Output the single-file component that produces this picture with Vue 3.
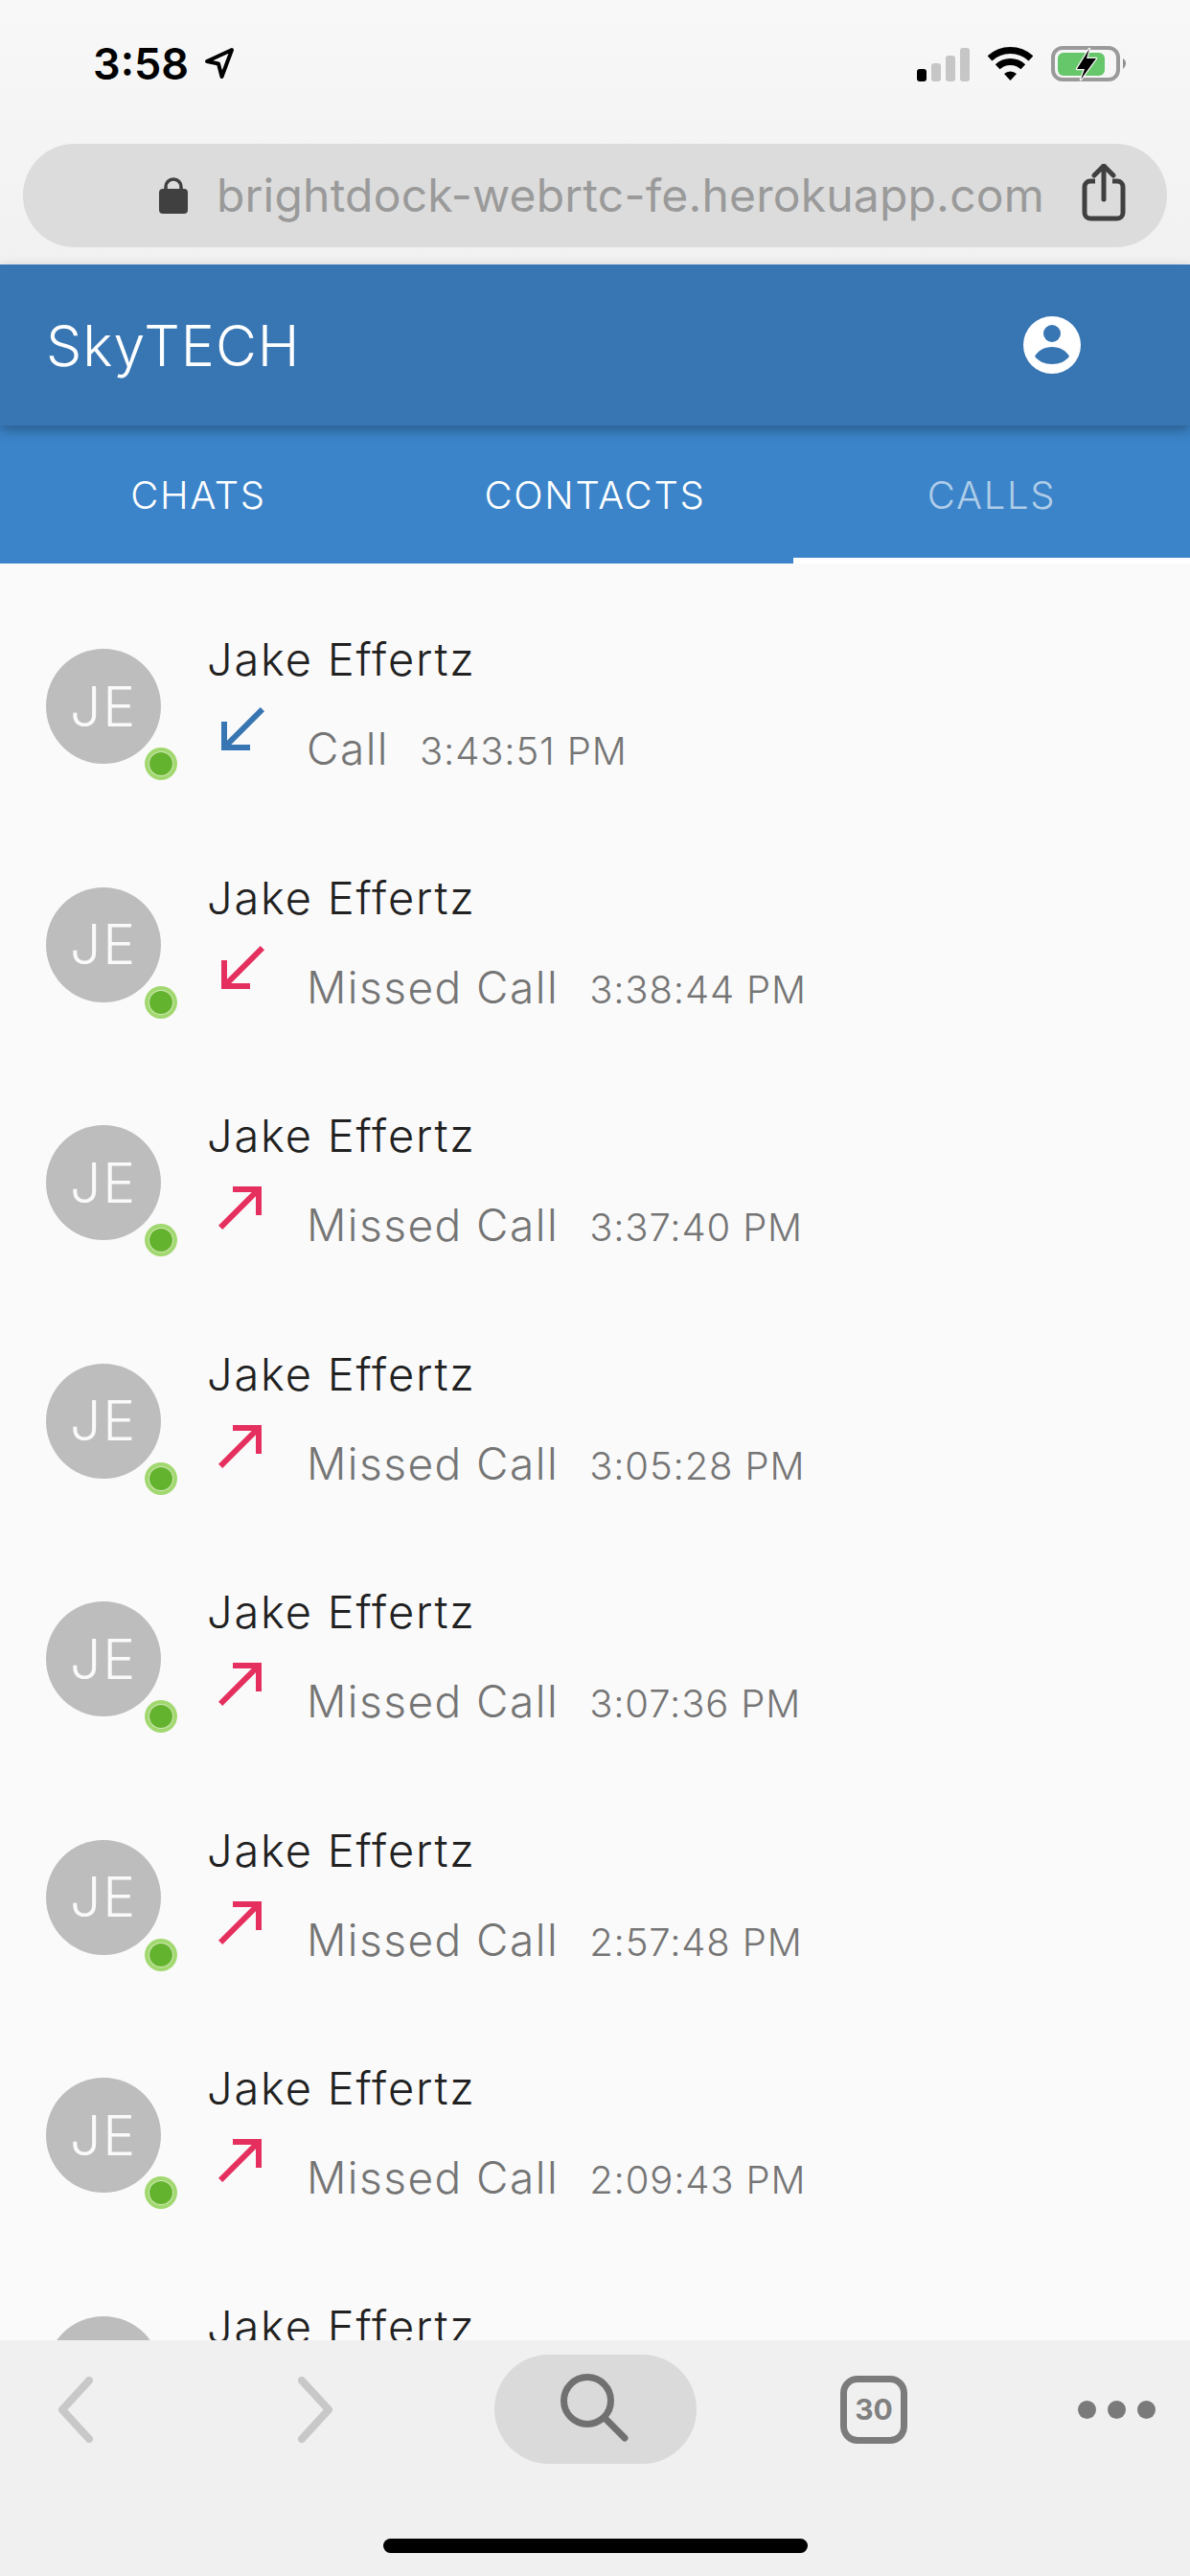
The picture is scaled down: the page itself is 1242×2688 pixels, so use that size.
<script setup>
const rows = [
  { label: 'Call', time: '3:43:51 PM', dir: 'in', color: 'blue' },
  { label: 'Missed Call', time: '3:38:44 PM', dir: 'in', color: 'pink' },
  { label: 'Missed Call', time: '3:37:40 PM', dir: 'out', color: 'pink' },
  { label: 'Missed Call', time: '3:05:28 PM', dir: 'out', color: 'pink' },
  { label: 'Missed Call', time: '3:07:36 PM', dir: 'out', color: 'pink' },
  { label: 'Missed Call', time: '2:57:48 PM', dir: 'out', color: 'pink' },
  { label: 'Missed Call', time: '2:09:43 PM', dir: 'out', color: 'pink' },
  { label: 'Missed Call', time: '2:01:12 PM', dir: 'out', color: 'pink' }
]

const arrows = {
  in: 'M20 5.41L18.59 4 7 15.59V9H5v10h10v-2H8.41z',
  out: 'M9 5v2h6.59L4 18.59 5.41 20 17 8.41V15h2V5z'
}
</script>

<template>
  <div class="phone">
    <div class="chrome">
      <div class="status">
        <span class="clock">3:58</span>
        <svg class="location" width="36" height="36" viewBox="0 0 36 36">
          <path d="M31 3 5 15l12 2.500L20.500 31z" fill="none" stroke="#000" stroke-width="4" stroke-linejoin="round" />
        </svg>
        <svg class="signal" width="55" height="36" viewBox="0 0 55 36">
          <rect x="0" y="23" width="10" height="13" rx="3" fill="#000" />
          <rect x="15" y="17" width="10" height="19" rx="3" fill="#c6c6c6" />
          <rect x="30" y="9" width="10" height="27" rx="3" fill="#c6c6c6" />
          <rect x="45" y="1" width="10" height="35" rx="3" fill="#c6c6c6" />
        </svg>
        <svg class="wifi" width="47" height="36" viewBox="0 0 47 36">
          <path d="M2 12A31.500 31.500 0 0 1 45 12" fill="none" stroke="#000" stroke-width="7" />
          <path d="M10.200 20.750A19.500 19.500 0 0 1 36.800 20.750" fill="none" stroke="#000" stroke-width="7" />
          <path d="M23.500 35 17 28A9.500 9.500 0 0 1 30 28z" fill="#000" />
        </svg>
        <svg class="battery" width="80" height="38" viewBox="0 0 80 38">
          <rect x="2" y="2" width="68" height="33" rx="10" fill="none" stroke="#9a9a9a" stroke-width="4" />
          <rect x="7" y="7" width="49" height="24" rx="6" fill="#66c76a" />
          <path d="M75 13c2 1 3 3 3 5s-1 4-3 6z" fill="#8f8f8f" />
          <path d="M40 3 27 24h8l-4 11 16-22H37z" fill="#000" stroke="#f8f8f8" stroke-width="2.500" paint-order="stroke" stroke-linejoin="round" />
        </svg>
      </div>
      <div class="urlbar">
        <svg class="lock" width="30" height="38" viewBox="0 0 30 38">
          <path d="M7 14V10a8 8 0 0 1 16 0v4" fill="none" stroke="#404040" stroke-width="3.500" />
          <rect x="0" y="12" width="30" height="26" rx="4" fill="#404040" />
        </svg>
        <span class="url">brightdock-webrtc-fe.herokuapp.com</span>
        <svg class="share" width="46" height="60" viewBox="0 0 46 60">
          <path d="M14 18H9a6 6 0 0 0-6 6v27a6 6 0 0 0 6 6h28a6 6 0 0 0 6-6V24a6 6 0 0 0-6-6h-5" fill="none" stroke="#404040" stroke-width="5" />
          <path d="M23 37V3M13 12l10-10 10 10" fill="none" stroke="#404040" stroke-width="5" stroke-linecap="round" stroke-linejoin="round" />
        </svg>
      </div>
    </div>

    <header class="appbar">
      <span class="brand">SkyTECH</span>
      <svg class="account" width="60" height="60" viewBox="0 0 60 60">
        <circle cx="30" cy="30" r="30" fill="#fff" />
        <circle cx="30" cy="18" r="9" fill="#3776b3" />
        <path d="M12 42c3-6 10-10 18-10s15 4 18 10c-4 5-10 8-18 8s-14-3-18-8z" fill="#3776b3" />
      </svg>
    </header>

    <nav class="tabs">
      <div class="tab">CHATS</div>
      <div class="tab">CONTACTS</div>
      <div class="tab active">CALLS</div>
    </nav>

    <main class="list">
      <div v-for="(row, i) in rows" :key="i" class="row">
        <div class="avatar">
          JE
          <span class="online"></span>
        </div>
        <div class="info">
          <div class="name">Jake Effertz</div>
          <div class="sub">
            <svg class="arrow" :class="row.color" width="72" height="72" viewBox="0 0 24 24">
              <path :d="arrows[row.dir]" />
            </svg>
            <div class="detail">
              <span class="label">{{ row.label }}</span>
              <span class="time">{{ row.time }}</span>
            </div>
          </div>
        </div>
      </div>
    </main>

    <footer class="toolbar">
      <div class="tools">
        <svg class="back" width="37" height="69" viewBox="0 0 37 69">
          <path d="M33 4 5 34.500 33 65" fill="none" stroke="#c8c8c8" stroke-width="8" stroke-linecap="round" stroke-linejoin="round" />
        </svg>
        <svg class="forward" width="37" height="69" viewBox="0 0 37 69">
          <path d="M4 4 32 34.500 4 65" fill="none" stroke="#c8c8c8" stroke-width="8" stroke-linecap="round" stroke-linejoin="round" />
        </svg>
        <div class="search">
          <svg width="80" height="80" viewBox="0 0 80 80">
            <circle cx="31" cy="31" r="24.500" fill="none" stroke="#707070" stroke-width="7" />
            <path d="M49 49 70 70" stroke="#707070" stroke-width="7" stroke-linecap="round" />
          </svg>
        </div>
        <div class="count">30</div>
        <div class="more"><span></span><span></span><span></span></div>
      </div>
      <div class="homebar"></div>
    </footer>
  </div>
</template>

<style scoped>
.phone {
  width: 1242px;
  height: 2688px;
  display: flex;
  flex-direction: column;
  overflow: hidden;
  background: #fafafa;
  font-family: Inter, "Liberation Sans", sans-serif;
}

.chrome {
  height: 276px;
  flex-shrink: 0;
  background: linear-gradient(#f8f8f8, #f1f1f2);
}

.status {
  height: 150px;
  display: flex;
  align-items: flex-start;
  box-sizing: border-box;
  padding-left: 97px;
}

.clock {
  margin-top: 40px;
  font-size: 45px;
  line-height: 54px;
  font-weight: 600;
  color: #000;
}

.location {
  margin: 49px 0 0 14px;
}

.signal {
  margin: 49px 0 0 auto;
}

.wifi {
  margin: 49px 0 0 19px;
}

.battery {
  margin: 48px 65px 0 19px;
}

.urlbar {
  height: 108px;
  margin: 0 24px;
  padding: 0 43px 0 142px;
  display: flex;
  align-items: center;
  box-sizing: border-box;
  border-radius: 54px;
  background: #dcdcdc;
}

.lock {
  flex-shrink: 0;
}

.url {
  margin-left: 30px;
  font-size: 48px;
  line-height: 58px;
  letter-spacing: 0.2px;
  color: #9a9a9a;
  white-space: nowrap;
}

.share {
  margin: -6px 0 0 auto;
  flex-shrink: 0;
}

.appbar {
  height: 168px;
  flex-shrink: 0;
  position: relative;
  z-index: 2;
  display: flex;
  align-items: center;
  justify-content: space-between;
  box-sizing: border-box;
  padding: 0 114px 0 48px;
  background: #3776b3;
  box-shadow: 0 5px 12px rgba(0, 0, 0, 0.3);
}

.brand {
  font-size: 59px;
  font-weight: 300;
  letter-spacing: 1px;
  color: #fff;
}

.tabs {
  height: 144px;
  flex-shrink: 0;
  display: flex;
  background: #3b84c9;
}

.tab {
  flex: 1;
  display: flex;
  align-items: center;
  justify-content: center;
  box-sizing: border-box;
  font-size: 40px;
  font-weight: 300;
  letter-spacing: 1.7px;
  color: #fff;
}

.tab.active {
  color: rgba(255, 255, 255, 0.6);
  border-bottom: 6px solid #fff;
  padding-top: 6px;
}

.list {
  flex: 1;
  min-height: 0;
  overflow: hidden;
  padding-top: 25px;
}

.row {
  height: 248.500px;
  display: flex;
  align-items: center;
  padding-left: 48px;
}

.avatar {
  position: relative;
  width: 120px;
  height: 120px;
  flex-shrink: 0;
  display: flex;
  align-items: center;
  justify-content: center;
  border-radius: 50%;
  background: #bdbdbd;
  color: #fafafa;
  font-size: 57px;
  font-weight: 300;
  letter-spacing: 2px;
}

.online {
  position: absolute;
  right: -12px;
  bottom: -12px;
  width: 24px;
  height: 24px;
  border-radius: 50%;
  background: #64b32f;
  box-shadow: 0 0 0 1px #cfe8b4, 0 0 0 5px #a2d870;
}

.info {
  margin-left: 48px;
  height: 156px;
}

.name {
  font-size: 47px;
  line-height: 58px;
  font-weight: 300;
  letter-spacing: 1.8px;
  color: #212121;
  white-space: nowrap;
}

.sub {
  display: flex;
  align-items: flex-end;
  margin-top: 9px;
}

.arrow {
  flex-shrink: 0;
}

.arrow.blue {
  fill: #3776b3;
}

.arrow.pink {
  fill: #e5305f;
}

.detail {
  display: flex;
  align-items: baseline;
  margin: 0 0 -11px 32px;
  color: #757575;
  font-weight: 300;
  white-space: nowrap;
}

.label {
  font-size: 46px;
  line-height: 56px;
  letter-spacing: 1.45px;
}

.time {
  margin-left: 32px;
  font-size: 40px;
  letter-spacing: 0.85px;
}

.toolbar {
  height: 246px;
  flex-shrink: 0;
  position: relative;
  z-index: 2;
  box-sizing: border-box;
  padding-top: 15px;
  background: #f0f0f0;
}

.tools {
  height: 114px;
  display: flex;
  align-items: center;
}

.back {
  margin-left: 60px;
}

.forward {
  margin-left: 214px;
}

.search {
  width: 211px;
  height: 114px;
  margin-left: 168px;
  display: flex;
  align-items: center;
  justify-content: center;
  border-radius: 57px;
  background: #dadada;
}

.count {
  width: 70px;
  height: 71px;
  margin-left: 150px;
  display: flex;
  align-items: center;
  justify-content: center;
  box-sizing: border-box;
  border: 7px solid #7b7b7b;
  border-radius: 18px;
  color: #808080;
  font-size: 30px;
  font-weight: 700;
}

.more {
  margin-left: 178px;
  display: flex;
  gap: 12px;
}

.more span {
  width: 19px;
  height: 19px;
  border-radius: 50%;
  background: #7a7a7a;
}

.homebar {
  width: 443px;
  height: 15px;
  margin: 78px auto 0;
  border-radius: 8px;
  background: #000;
}
</style>
